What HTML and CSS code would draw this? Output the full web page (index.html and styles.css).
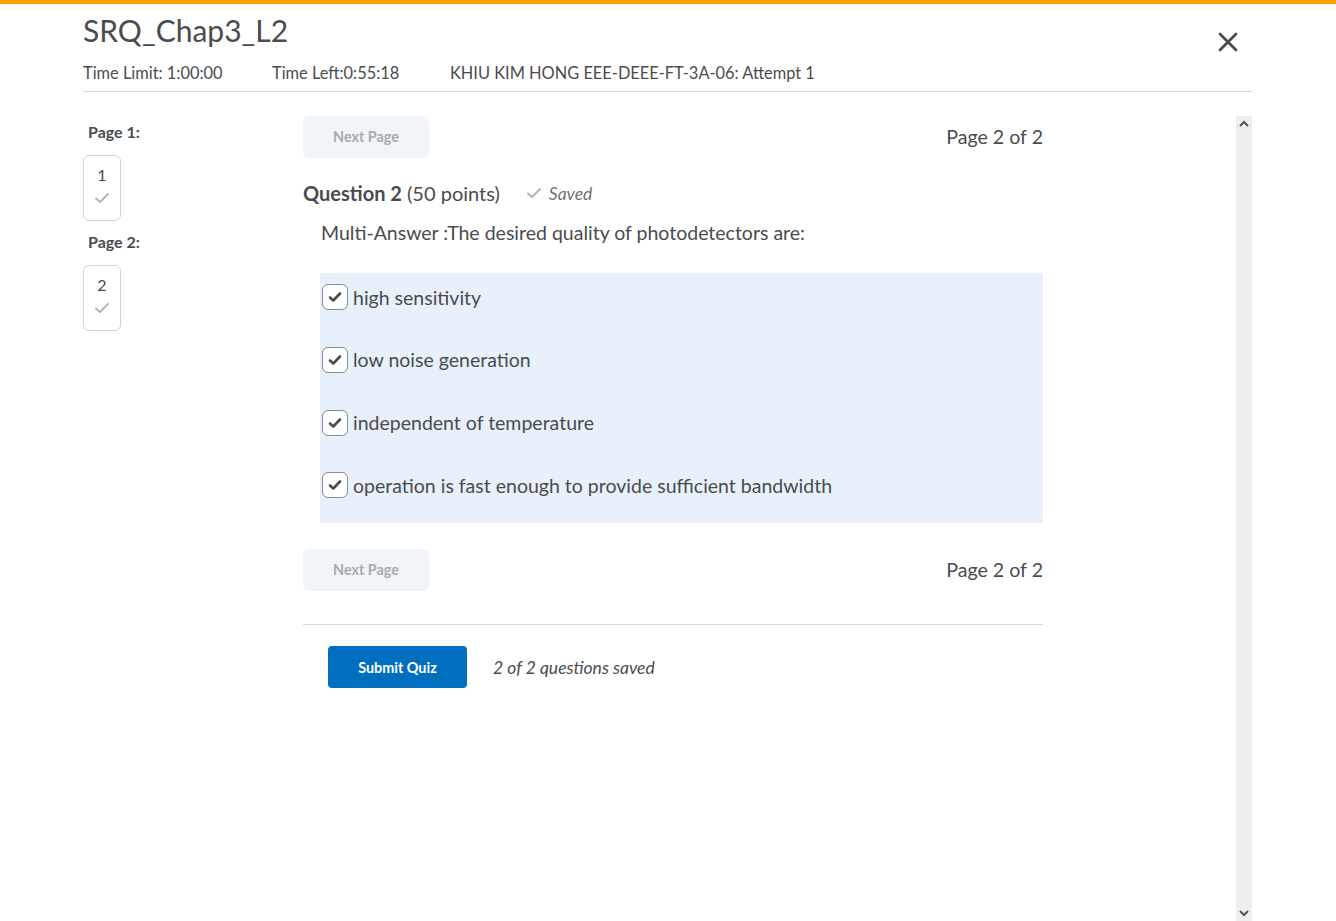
FILE: index.html
```html
<!DOCTYPE html>
<html lang="en">
<head>
<meta charset="utf-8">
<title>SRQ_Chap3_L2</title>
<link rel="stylesheet" href="styles.css">
</head>
<body>
<div class="topbar"></div>
<div class="page">
  <header class="header">
    <div class="title-row">
      <h1 class="title">SRQ_Chap3_L2</h1>
      <button class="close" aria-label="Close">
        <svg width="22" height="22" viewBox="0 0 22 22"><path d="M3 3 L19 19 M19 3 L3 19" stroke="#494c4e" stroke-width="2.8" stroke-linecap="round"/></svg>
      </button>
    </div>
    <div class="meta">
      <span class="meta-limit">Time Limit: 1:00:00</span>
      <span class="meta-left">Time Left:0:55:18</span>
      <span class="meta-user">KHIU KIM HONG EEE-DEEE-FT-3A-06: Attempt 1</span>
    </div>
  </header>

  <div class="body">
    <aside class="nav">
      <div class="nav-label">Page 1:</div>
      <div class="nav-box"><span class="nav-num">1</span>
        <svg class="nav-check" width="16" height="12" viewBox="0 0 16 12"><path d="M2 6.5 L6 10 L14 2" fill="none" stroke="#b1b7bd" stroke-width="2" stroke-linecap="round" stroke-linejoin="round"/></svg>
      </div>
      <div class="nav-label">Page 2:</div>
      <div class="nav-box"><span class="nav-num">2</span>
        <svg class="nav-check" width="16" height="12" viewBox="0 0 16 12"><path d="M2 6.5 L6 10 L14 2" fill="none" stroke="#b1b7bd" stroke-width="2" stroke-linecap="round" stroke-linejoin="round"/></svg>
      </div>
    </aside>

    <main class="main">
      <div class="pager">
        <button class="btn-next" disabled>Next Page</button>
        <span class="pager-text">Page 2 of 2</span>
      </div>

      <div class="question-head">
        <span class="q-title"><b>Question 2</b> (50 points)</span>
        <span class="saved">
          <svg width="16" height="12" viewBox="0 0 16 12"><path d="M2 6.5 L6 10 L14 2" fill="none" stroke="#b1b7bd" stroke-width="2" stroke-linecap="round" stroke-linejoin="round"/></svg>
          <i>Saved</i>
        </span>
      </div>
      <p class="q-text">Multi-Answer :The desired quality of photodetectors are:</p>

      <div class="answers">
        <label class="answer"><span class="cb"><svg width="14" height="12" viewBox="0 0 14 12"><path d="M2 6.5 L5.3 9.5 L12 2.5" fill="none" stroke="#494c4e" stroke-width="2.6" stroke-linecap="round" stroke-linejoin="round"/></svg></span>high sensitivity</label>
        <label class="answer"><span class="cb"><svg width="14" height="12" viewBox="0 0 14 12"><path d="M2 6.5 L5.3 9.5 L12 2.5" fill="none" stroke="#494c4e" stroke-width="2.6" stroke-linecap="round" stroke-linejoin="round"/></svg></span>low noise generation</label>
        <label class="answer"><span class="cb"><svg width="14" height="12" viewBox="0 0 14 12"><path d="M2 6.5 L5.3 9.5 L12 2.5" fill="none" stroke="#494c4e" stroke-width="2.6" stroke-linecap="round" stroke-linejoin="round"/></svg></span>independent of temperature</label>
        <label class="answer"><span class="cb"><svg width="14" height="12" viewBox="0 0 14 12"><path d="M2 6.5 L5.3 9.5 L12 2.5" fill="none" stroke="#494c4e" stroke-width="2.6" stroke-linecap="round" stroke-linejoin="round"/></svg></span>operation is fast enough to provide sufficient bandwidth</label>
      </div>

      <div class="pager pager-bottom">
        <button class="btn-next" disabled>Next Page</button>
        <span class="pager-text">Page 2 of 2</span>
      </div>

      <div class="submit-row">
        <button class="btn-submit">Submit Quiz</button>
        <i class="saved-count">2 of 2 questions saved</i>
      </div>
    </main>

    <div class="scrollbar">
      <svg width="12" height="8" viewBox="0 0 12 8"><path d="M2 6 L6 2 L10 6" fill="none" stroke="#555" stroke-width="2"/></svg>
      <svg width="12" height="8" viewBox="0 0 12 8"><path d="M2 2 L6 6 L10 2" fill="none" stroke="#555" stroke-width="2"/></svg>
    </div>
  </div>
</div>
</body>
</html>
```

FILE: styles.css
```css
* { box-sizing: border-box; }
html, body { margin: 0; padding: 0; }
body {
  font-family: Lato, "Open Sans", "Liberation Sans", sans-serif;
  color: #494c4e;
  background: #fff;
  height: 921px;
  overflow: hidden;
}
.topbar { height: 4px; background: #ffa000; }
.page { margin: 0 84px 0 83px; display: flex; flex-direction: column; height: 917px; }

.header { border-bottom: 1px solid #d3d9e3; padding-bottom: 8px; }
.title-row { display: flex; justify-content: space-between; align-items: flex-start; }
.title { margin: 8px 0 0; font-size: 30px; font-weight: 400; line-height: 36px; color: #494c4e; }
.close {
  border: 0; background: none; padding: 0; margin: 27px 13px 0 0;
  width: 22px; height: 22px; cursor: pointer;
}
.meta { margin-top: 10px; font-size: 16.4px; line-height: 20px; display: flex; }
.meta-limit { width: 189px; }
.meta-left { width: 178px; }

.body { flex: 1; display: flex; padding-top: 24px; min-height: 0; }

.nav { width: 220px; flex: none; }
.nav-label { font-size: 16px; font-weight: 700; padding-left: 5px; line-height: 20px; margin-top: 6px; }
.nav-box {
  width: 38px; height: 66px; margin-top: 13px; margin-bottom: 11px;
  border: 1px solid #cdd3d9; border-radius: 6px;
  display: flex; flex-direction: column; align-items: center; padding-top: 10px;
}
.nav-num { font-size: 16px; line-height: 18px; }
.nav-check { margin-top: 8px; }

.main { width: 740px; flex: none; }
.pager { display: flex; justify-content: space-between; align-items: center; height: 42px; }
.btn-next {
  width: 126px; height: 42px; border: 0; border-radius: 6px;
  background: #f1f4f9; color: #a8abae; font-family: inherit; font-size: 14.4px; font-weight: 700;
  padding-bottom: 2px;
}
.pager-text { font-size: 19.6px; padding-bottom: 2px; }

.question-head { display: flex; align-items: center; margin-top: 22px; height: 26px; }
.q-title { font-size: 20px; }
.q-title b { font-weight: 700; }
.saved { margin-left: 26px; display: flex; align-items: center; gap: 7px; color: #6e7376; font-size: 17.5px; }
.q-text { margin: 14px 0 0 18px; font-size: 19.5px; line-height: 26px; }

.answers {
  margin: 27px 0 0 17px; background: #e8f1fb; padding: 11px 0 25px 2px;
}
.answer { display: flex; align-items: center; font-size: 19.5px; padding-top: 36.8px; }
.answer:first-child { padding-top: 0; }
.cb {
  width: 26px; height: 26px; border: 1px solid #868c92; border-radius: 6px; background: #fff;
  display: flex; align-items: center; justify-content: center; margin-right: 5px; flex: none;
}

.pager-bottom { margin-top: 26px; }

.submit-row {
  margin-top: 33px; border-top: 1px solid #d3d9e3; padding: 21px 0 0 25px;
  display: flex; align-items: center;
}
.btn-submit {
  width: 139px; height: 42px; border: 0; border-radius: 4px; background: #006fbf; color: #fff;
  font-family: inherit; font-size: 14.4px; font-weight: 700;
}
.saved-count { margin-left: 26px; font-size: 17.5px; color: #494c4e; }

.scrollbar {
  margin-left: auto; width: 16px; background: #eeeeee;
  display: flex; flex-direction: column; justify-content: space-between; align-items: center;
  padding: 4px 0 4px;
}
```
